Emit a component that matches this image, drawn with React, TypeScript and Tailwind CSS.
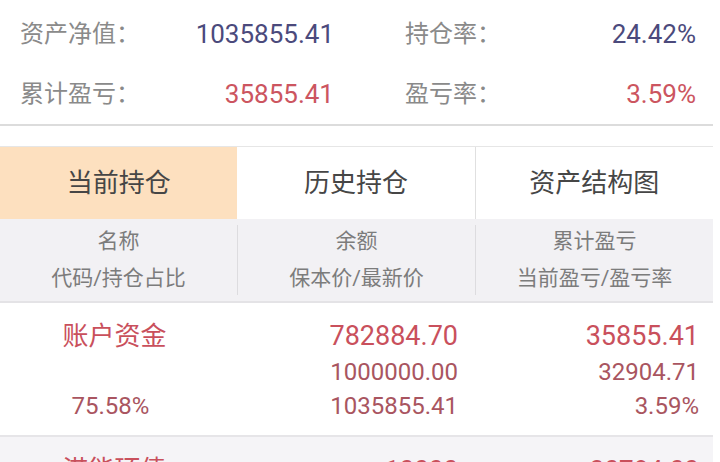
import React from 'react';

const font = { fontFamily: '"Roboto", "Noto Sans CJK SC", sans-serif' };

type Summary = { label: string; value: string; tone: 'blue' | 'red' };

const summary: Summary[][] = [
  [
    { label: '资产净值：', value: '1035855.41', tone: 'blue' },
    { label: '持仓率：', value: '24.42%', tone: 'blue' },
  ],
  [
    { label: '累计盈亏：', value: '35855.41', tone: 'red' },
    { label: '盈亏率：', value: '3.59%', tone: 'red' },
  ],
];

const tabs = ['当前持仓', '历史持仓', '资产结构图'];

const headers = [
  ['名称', '代码/持仓占比'],
  ['余额', '保本价/最新价'],
  ['累计盈亏', '当前盈亏/盈亏率'],
];

export default function App() {
  return (
    <div className="w-[720px] h-[462px] overflow-hidden bg-white" style={font}>
      <div className="w-[713px]">
        {/* Summary */}
        <div className="pt-1 border-b-2 border-[#dcdcdc]">
          {summary.map((row, i) => (
            <div key={i} className="h-[60px] flex items-center">
              {row.map((s, j) => (
                <div
                  key={j}
                  className={`flex items-center justify-between ${j === 0 ? 'w-[334px] pl-[20px]' : 'w-[362px] pl-[71px]'}`}
                >
                  <span className="text-[24px] text-[#8a8a8a]">{s.label}</span>
                  <span className={`text-[26px] ${s.tone === 'blue' ? 'text-[#4b4a7c]' : 'text-[#cc5560]'}`}>{s.value}</span>
                </div>
              ))}
            </div>
          ))}
        </div>

        {/* Tabs */}
        <div className="mt-[20px] flex h-[73px] border-t border-[#e6e6e6]">
          {tabs.map((t, i) => (
            <div
              key={t}
              className={`flex-1 flex items-center justify-center text-[26px] text-[#464646] ${
                i === 0 ? 'bg-[#fde0bf]' : 'bg-white'
              } ${i === 2 ? 'border-l border-[#e0e0e0]' : ''}`}
            >
              {t}
            </div>
          ))}
        </div>

        {/* Table header */}
        <div className="flex h-[84px] bg-[#f2f1f4] border-b-2 border-[#e4e3e6] items-center">
          {headers.map((h, i) => (
            <div
              key={i}
              className={`flex-1 flex flex-col items-center justify-center gap-[4px] text-[21px] text-[#7c7c7c] leading-[33px] ${
                i > 0 ? 'border-l border-[#dddcdf]' : ''
              }`}
            >
              <span>{h[0]}</span>
              <span>{h[1]}</span>
            </div>
          ))}
        </div>

        {/* Account row */}
        <div className="flex pt-[14px] pb-[12px] border-b-2 border-[#e6e5e8] text-[#c9505c]">
          <div className="flex-1 flex flex-col items-center">
            <div className="h-[38px] flex items-center text-[26px]">账户资金</div>
            <div className="h-[34px]" />
            <div className="h-[34px] flex items-center text-[24px] text-[#a95560] pr-2">75.58%</div>
          </div>
          <div className="flex-1 flex flex-col items-end pr-[12px]">
            <div className="h-[38px] flex items-center text-[27px]">782884.70</div>
            <div className="h-[34px] flex items-center text-[24px] text-[#a95560]">1000000.00</div>
            <div className="h-[34px] flex items-center text-[24px] text-[#a95560]">1035855.41</div>
          </div>
          <div className="flex-1 flex flex-col items-end pr-[14px]">
            <div className="h-[38px] flex items-center text-[27px]">35855.41</div>
            <div className="h-[34px] flex items-center text-[24px] text-[#a95560]">32904.71</div>
            <div className="h-[34px] flex items-center text-[24px] text-[#a95560]">3.59%</div>
          </div>
        </div>

        {/* Next row, cut by the window edge */}
        <div className="flex bg-[#f5f4f7] pt-[14px] text-[#c9505c] text-[26px]">
          <div className="flex-1 flex justify-center">
            <div className="h-[38px] flex items-center">港能环债</div>
          </div>
          <div className="flex-1 flex justify-end pr-[12px]">
            <div className="h-[38px] flex items-center">10000</div>
          </div>
          <div className="flex-1 flex justify-end pr-[14px]">
            <div className="h-[38px] flex items-center">30784.00</div>
          </div>
        </div>
      </div>
    </div>
  );
}
